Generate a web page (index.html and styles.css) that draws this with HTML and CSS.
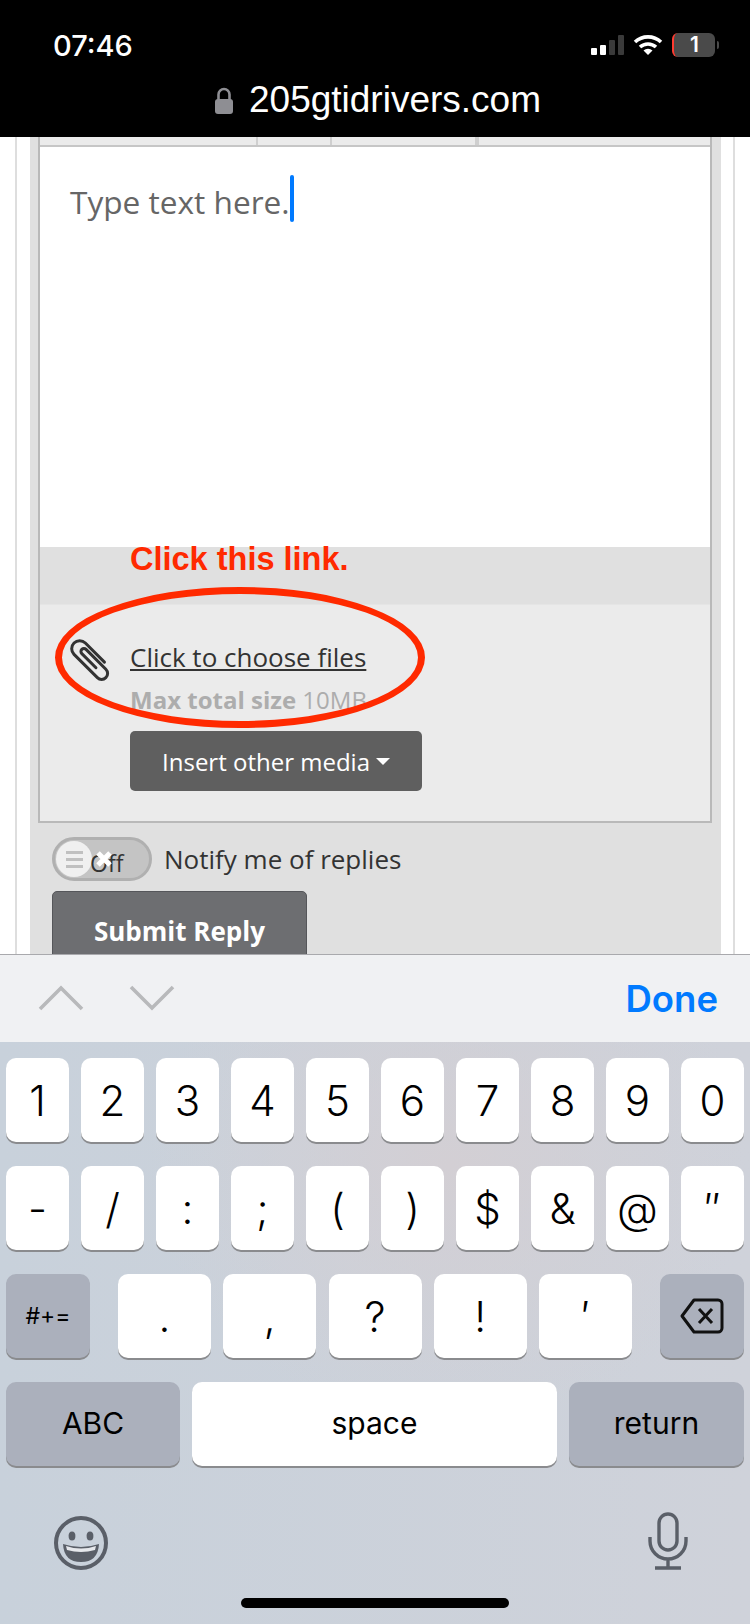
FILE: index.html
```html
<!DOCTYPE html>
<html lang="en">
<head>
  <meta charset="UTF-8" />
  <title>205gtidrivers.com</title>
  <link rel="stylesheet" href="styles.css">
</head>
<body>

<!-- Phone status bar and address -->
<header class="top-bar">
  <div class="status-row">
    <span class="time">07:46</span>
    <div class="status-icons">
      <div class="signal">
        <i class="bar b1 on"></i><i class="bar b2 on"></i><i class="bar b3"></i><i class="bar b4"></i>
      </div>
      <svg class="wifi" width="30" height="22" viewBox="0 0 30 22">
        <path d="M2 8 A19 19 0 0 1 28 8" />
        <path d="M7 13 A12 12 0 0 1 23 13" />
        <path d="M15 21 L10.5 16.5 A6.5 6.5 0 0 1 19.5 16.5 Z" class="wifi-dot" />
      </svg>
      <div class="battery"><span>1</span></div>
      <i class="battery-nub"></i>
    </div>
  </div>
  <div class="address">
    <svg class="lock" width="20" height="27" viewBox="0 0 20 27">
      <path d="M4.5 13 V7.5 a5.5 5.5 0 0 1 11 0 V13" fill="none" stroke="#8e8e93" stroke-width="2.6" />
      <rect x="1" y="12" width="18" height="15" rx="3" fill="#8e8e93" />
    </svg>
    <span>205gtidrivers.com</span>
  </div>
</header>

<!-- Web page -->
<main class="page">
  <div class="thread">
    <div class="reply-form">
      <div class="editor">
        <div class="editor-tools">
          <i class="tool t1"></i><i class="tool t2"></i><i class="tool t3"></i><i class="tool t4"></i>
        </div>
        <div class="editor-text"><span class="placeholder">Type text here.</span><i class="caret"></i></div>
        <div class="editor-band"></div>
        <div class="attach">
          <svg class="clip" width="42" height="44" viewBox="0 0 42 44">
            <g transform="translate(21 22) rotate(-45) translate(-8 -24)">
              <path d="M16 35 V8 A8 8 0 0 0 0 8 V41 A6 6 0 0 0 12 41 V13 A3 3 0 0 0 6 13 V33" fill="none" stroke="#333" stroke-width="3" stroke-linecap="round" />
            </g>
          </svg>
          <div class="attach-info">
            <a class="choose-link" href="#">Click to choose files</a>
            <p class="max-size"><b>Max total size</b> 10MB</p>
            <button class="media-btn">Insert other media<i class="caret-down"></i></button>
          </div>
        </div>
      </div>

      <div class="notify-row">
        <div class="toggle">
          <span class="knob"><i></i><i></i><i></i></span>
          <span class="toggle-text">Off</span>
          <svg class="toggle-x" width="18" height="18" viewBox="0 0 18 18">
            <path d="M3 3 L15 15 M15 3 L3 15" stroke="#fff" stroke-width="5" />
          </svg>
        </div>
        <span class="notify-label">Notify me of replies</span>
      </div>
      <button class="submit-btn">Submit Reply</button>
    </div>
  </div>

  <!-- Red markup drawn over the screenshot -->
  <div class="note">Click this link.</div>
  <div class="note-ring"></div>
</main>

<!-- iOS keyboard -->
<section class="keyboard">
  <div class="kb-toolbar">
    <div class="kb-arrows">
      <svg width="46" height="26" viewBox="0 0 46 26"><path d="M2 24 L23 3 L44 24" /></svg>
      <svg width="46" height="26" viewBox="0 0 46 26"><path d="M2 2 L23 23 L44 2" /></svg>
    </div>
    <span class="done">Done</span>
  </div>
  <div class="kb-keys">
    <div class="key-row">
      <div class="key">1</div><div class="key">2</div><div class="key">3</div><div class="key">4</div><div class="key">5</div>
      <div class="key">6</div><div class="key">7</div><div class="key">8</div><div class="key">9</div><div class="key">0</div>
    </div>
    <div class="key-row">
      <div class="key">-</div><div class="key">/</div><div class="key">:</div><div class="key">;</div><div class="key">(</div>
      <div class="key">)</div><div class="key">$</div><div class="key">&amp;</div><div class="key">@</div><div class="key">″</div>
    </div>
    <div class="key-row">
      <div class="key dark shift">#+=</div>
      <div class="punct">
        <div class="key wide">.</div><div class="key wide">,</div><div class="key wide">?</div><div class="key wide">!</div><div class="key wide">′</div>
      </div>
      <div class="key dark shift">
        <svg width="44" height="36" viewBox="0 0 44 36">
          <path d="M14 2 H38 a4 4 0 0 1 4 4 V30 a4 4 0 0 1 -4 4 H14 L2 18 Z" fill="none" stroke="#111" stroke-width="3" stroke-linejoin="round" />
          <path d="M19 11 L32 25 M32 11 L19 25" stroke="#111" stroke-width="3" />
        </svg>
      </div>
    </div>
    <div class="key-row bottom-row">
      <div class="key dark abc">ABC</div>
      <div class="key space">space</div>
      <div class="key dark return">return</div>
    </div>
  </div>
  <div class="kb-bottom">
    <svg class="emoji" width="56" height="56" viewBox="0 0 56 56">
      <circle cx="28" cy="28" r="25" fill="none" stroke="#5a5f68" stroke-width="4" />
      <ellipse cx="19" cy="21" rx="3.4" ry="4.6" fill="#5a5f68" />
      <ellipse cx="37" cy="21" rx="3.4" ry="4.6" fill="#5a5f68" />
      <path d="M10 29 Q28 35 46 29 Q45 47 28 47 Q11 47 10 29 Z" fill="#5a5f68" />
      <path d="M13 31 Q28 36 43 31 L42 35 Q28 39 14 35 Z" fill="#e6e8ec" />
    </svg>
    <svg width="40" height="58" viewBox="0 0 40 58">
      <rect x="11" y="2" width="18" height="36" rx="9" fill="none" stroke="#5a5f68" stroke-width="3.4" />
      <path d="M2 25 V29 a18 18 0 0 0 36 0 V25 M20 47 V55 M7 56 H33" fill="none" stroke="#5a5f68" stroke-width="3.4" />
    </svg>
  </div>
  <div class="home-bar"></div>
</section>

</body>
</html>
```

FILE: styles.css
```css
body {
  margin: 0;
  width: 750px;
  height: 1624px;
  overflow: hidden;
  display: flex;
  flex-direction: column;
  font-family: 'Open Sans', sans-serif;
  background: #fff;
}

/* Status bar */
.top-bar {
  height: 137px;
  background: #000;
  color: #fff;
  font-family: 'Inter', 'Liberation Sans', sans-serif;
  flex-shrink: 0;
}

.status-row {
  display: flex;
  justify-content: space-between;
  align-items: center;
  height: 46px;
  padding: 22px 31px 0 53px;
}

.time {
  font-size: 29px;
  font-weight: 500;
}

.status-icons {
  display: flex;
  align-items: center;
}

.signal {
  display: flex;
  align-items: flex-end;
  gap: 3px;
  height: 20px;
  margin-right: 9px;
}

.bar {
  width: 6px;
  background: #3a3a3a;
  border-radius: 1px;
}

.bar.on { background: #fff; }
.b1 { height: 7px; }
.b2 { height: 10px; }
.b3 { height: 15px; }
.b4 { height: 20px; }

.wifi {
  margin-right: 9px;
}

.wifi path {
  fill: none;
  stroke: #fff;
  stroke-width: 3.6;
}

.wifi .wifi-dot {
  fill: #fff;
  stroke: none;
}

.battery {
  width: 41px;
  height: 24px;
  background: #4a4a4a;
  border-left: 2px solid #ff3b30;
  border-radius: 6px;
  text-align: center;
  font-size: 21px;
  font-weight: 600;
  line-height: 24px;
}

.battery-nub {
  width: 2px;
  height: 8px;
  margin-left: 2px;
  background: #4a4a4a;
  border-radius: 0 2px 2px 0;
}

.address {
  display: flex;
  justify-content: center;
  align-items: center;
  gap: 15px;
  height: 50px;
  margin-top: 7px;
  padding-left: 5px;
  font-family: 'Liberation Sans', sans-serif;
  font-size: 37px;
}

/* Page */
.page {
  position: relative;
  height: 817px;
  padding: 0 15px;
  overflow: hidden;
  flex-shrink: 0;
}

.thread {
  height: 100%;
  padding: 0 12px 0 13px;
  border-left: 2px solid #dedede;
  border-right: 2px solid #dedede;
  box-sizing: border-box;
}

.reply-form {
  height: 100%;
  padding: 0 9px 0 8px;
  background: #e0e0e0;
}

.editor {
  border: 2px solid #b9b9b9;
  border-top: none;
}

.editor-tools {
  display: flex;
  height: 8px;
  background: #ebebeb;
  border-bottom: 2px solid #c6c6c6;
}

.tool {
  border-right: 2px solid #cfcfcf;
  box-sizing: border-box;
}

.t1 { width: 218px; }
.t2 { width: 74px; }
.t3 { width: 145px; }

.editor-text {
  display: flex;
  align-items: flex-start;
  height: 400px;
  padding-left: 30px;
  background: #fff;
  box-sizing: border-box;
}

.placeholder {
  font-size: 31.6px;
  line-height: 44px;
  margin-top: 33px;
  color: #666;
}

.caret {
  width: 4px;
  height: 47px;
  margin-top: 28px;
  background: #007aff;
  border-radius: 2px;
}

.editor-band {
  height: 57px;
  background: #e0e0e0;
  border-bottom: 1px solid #e5e5e5;
}

.attach {
  display: flex;
  height: 216px;
  padding-left: 30px;
  background: #ebebeb;
  box-sizing: border-box;
}

.clip {
  margin-top: 33px;
  margin-right: 18px;
}

.attach-info {
  padding-top: 36px;
}

.choose-link {
  display: block;
  font-size: 26px;
  line-height: 32px;
  color: #333;
}

.max-size {
  margin: 12px 0 0;
  font-size: 24px;
  line-height: 30px;
  color: #adadad;
}

.media-btn {
  display: flex;
  align-items: center;
  justify-content: center;
  width: 292px;
  height: 60px;
  margin-top: 16px;
  border: none;
  border-radius: 5px;
  background: #5f5f5f;
  color: #fff;
  font-family: 'Open Sans', sans-serif;
  font-size: 24px;
}

.caret-down {
  width: 0;
  height: 0;
  margin-left: 6px;
  border-left: 7px solid transparent;
  border-right: 7px solid transparent;
  border-top: 7px solid #fff;
}

.notify-row {
  display: flex;
  align-items: center;
  gap: 12px;
  margin: 14px 0 0 14px;
}

.toggle {
  position: relative;
  width: 100px;
  height: 44px;
  background: #c4c4c4;
  border: 3px solid #b0b0b0;
  border-radius: 22px;
  box-sizing: border-box;
}

.knob {
  position: absolute;
  left: 1px;
  top: 1px;
  width: 36px;
  height: 36px;
  display: flex;
  flex-direction: column;
  justify-content: center;
  align-items: center;
  gap: 4px;
  background: #f0f0f0;
  border-radius: 50%;
}

.knob i {
  width: 17px;
  height: 3px;
  background: #c0c0c0;
}

.toggle-text {
  position: absolute;
  left: 35px;
  top: 8px;
  font-size: 23px;
  line-height: 30px;
  color: #333;
}

.toggle-x {
  position: absolute;
  left: 40px;
  top: 10px;
}

.notify-label {
  font-size: 26px;
  line-height: 36px;
  color: #333;
}

.submit-btn {
  display: block;
  width: 255px;
  height: 80px;
  margin: 10px 0 0 14px;
  border: 1px solid #55565a;
  border-radius: 5px;
  background: #6d6e71;
  color: #fff;
  font-family: 'Open Sans', sans-serif;
  font-size: 26px;
  font-weight: 700;
}

/* Red markup */
.note {
  position: absolute;
  left: 130px;
  top: 404px;
  font-family: 'Liberation Sans', sans-serif;
  font-size: 32.5px;
  font-weight: 700;
  line-height: 36px;
  color: #ff2a00;
}

.note-ring {
  position: absolute;
  left: 55px;
  top: 450px;
  width: 370px;
  height: 141px;
  border: 7px solid #ff2a00;
  border-radius: 50%;
  box-sizing: border-box;
}

/* Keyboard */
.keyboard {
  position: relative;
  flex: 1;
  border-top: 1px solid #a9a9ad;
  font-family: 'Inter', 'Liberation Sans', sans-serif;
  color: #000;
  background:
    radial-gradient(ellipse 300px 260px at 450px 210px, #d3cfd4 0%, rgba(211, 207, 212, 0) 100%),
    linear-gradient(to right, #c8d1db, #cfd2da);
}

.kb-toolbar {
  display: flex;
  justify-content: space-between;
  align-items: center;
  height: 87px;
  padding: 0 32px 0 38px;
  background: #f0f1f3;
}

.kb-arrows {
  display: flex;
  gap: 45px;
  margin-top: -1px;
}

.kb-arrows path {
  fill: none;
  stroke: #b8b9bb;
  stroke-width: 3.6;
}

.done {
  font-size: 36.5px;
  font-weight: 600;
  color: #007aff;
}

.kb-keys {
  display: flex;
  flex-direction: column;
  gap: 24px;
  padding: 16px 6px 0;
}

.key-row {
  display: flex;
  justify-content: space-between;
}

.key {
  display: flex;
  align-items: center;
  justify-content: center;
  width: 63px;
  height: 84px;
  background: #fff;
  border-radius: 10px;
  box-shadow: 0 2px 0 #8a8b8e;
  font-size: 42px;
  font-weight: 300;
}

.key.dark {
  background: #abb0bc;
}

.shift {
  width: 84px;
  font-size: 23px;
  font-weight: 400;
}

.punct {
  display: flex;
  justify-content: space-between;
  width: 514px;
}

.wide {
  width: 93px;
}

.bottom-row .key {
  padding-bottom: 3px;
  box-sizing: border-box;
  font-size: 30px;
  font-weight: 400;
}

.bottom-row .abc { width: 174px; }
.bottom-row .space { width: 365px; }
.bottom-row .return { width: 175px; }

.kb-bottom {
  display: flex;
  justify-content: space-between;
  align-items: flex-start;
  padding: 46px 62px 0 53px;
}

.emoji {
  margin-top: 3px;
}

.home-bar {
  position: absolute;
  left: 241px;
  bottom: 16px;
  width: 268px;
  height: 10px;
  background: #000;
  border-radius: 5px;
}
```
